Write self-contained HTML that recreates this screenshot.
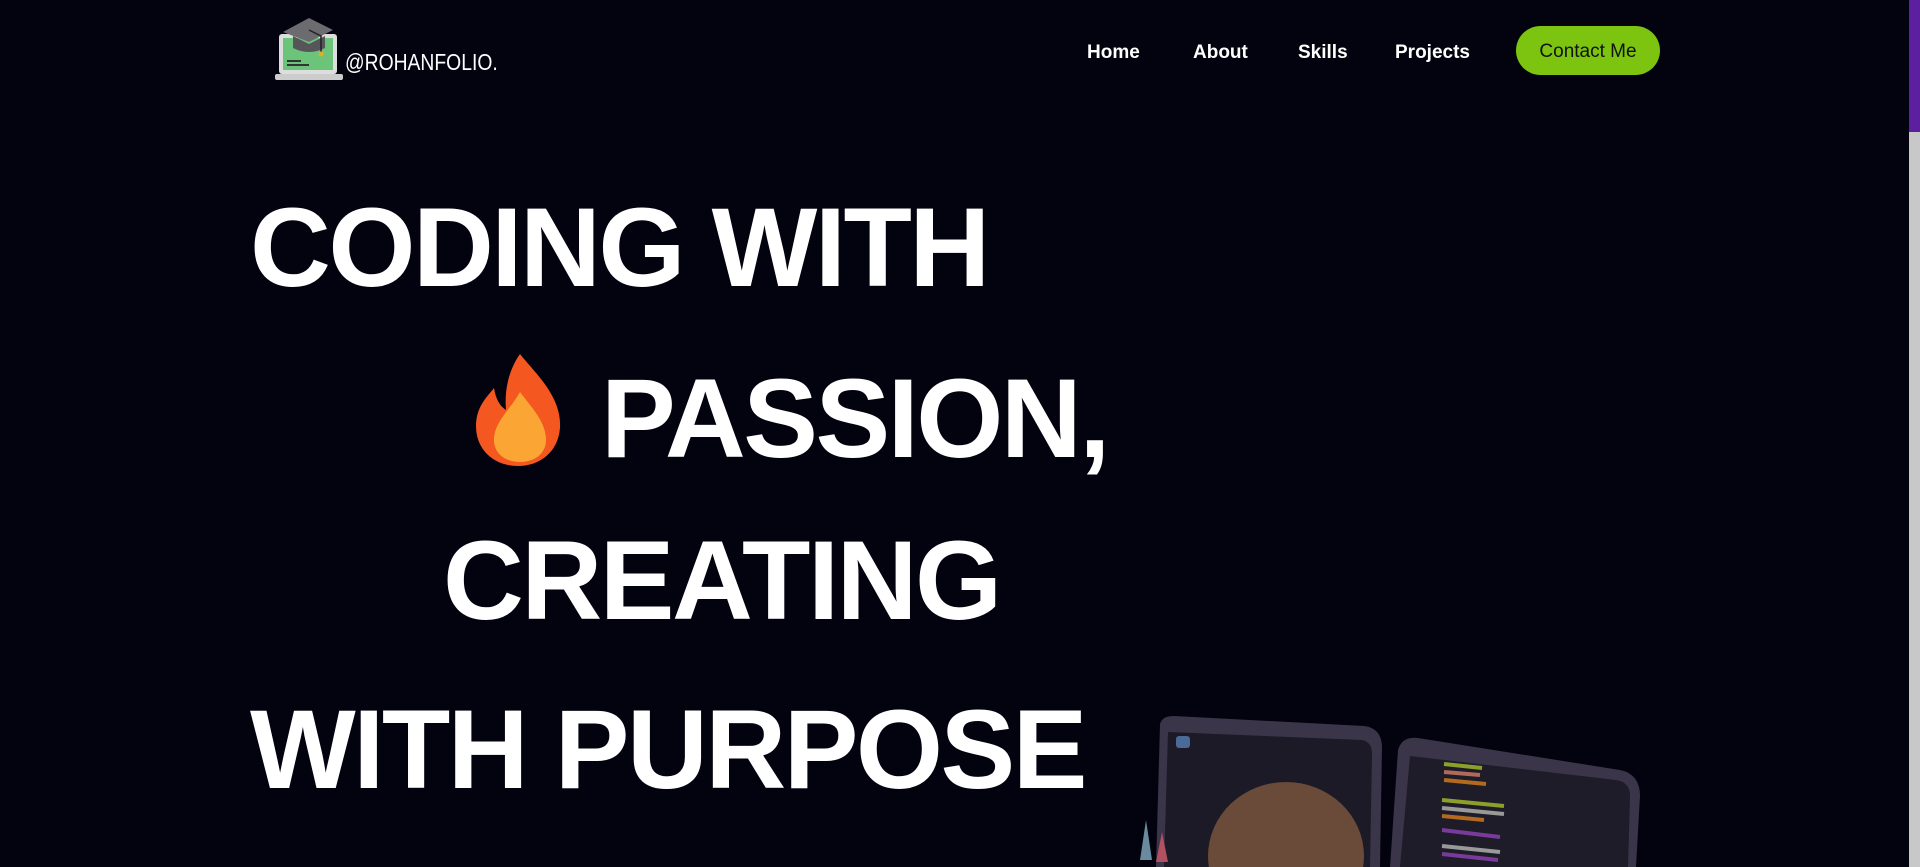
<!DOCTYPE html>
<html><head><style>
html,body{margin:0;padding:0;width:1920px;height:867px;overflow:hidden;background:#03020f;font-family:"Liberation Sans",sans-serif;}
.nav a{position:absolute;top:42px;color:#fff;font-size:19px;font-weight:bold;text-decoration:none}
.btn{position:absolute;left:1516px;top:26px;width:144px;height:49px;border-radius:25px;background:#7cc40f;color:#111;font-size:19px;line-height:51px;text-align:center}
.h{position:absolute;color:#fff;font-weight:bold;font-size:112px;letter-spacing:-2.5px;line-height:1;white-space:nowrap}
.sb{position:absolute;right:0;top:0;width:11px;height:867px;background:#c8c8c8}
.sb div{height:132px;background:#5b1fa0}
</style></head><body>
<svg style="position:absolute;left:273px;top:14px" width="72" height="72" viewBox="0 0 72 72">
<rect x="6" y="20" width="58" height="40" rx="3" fill="#ddd"/>
<rect x="10" y="24" width="50" height="32" fill="#6cc37a"/>
<rect x="2" y="60" width="68" height="6" rx="2" fill="#ccc"/>
<rect x="14" y="46" width="14" height="2" fill="#333"/><rect x="14" y="50" width="22" height="2" fill="#333"/>
<path d="M10 18 L36 4 L60 16 L36 28 Z" fill="#6b6b70"/>
<path d="M20 22 L20 34 Q36 42 52 34 L52 22 L36 30 Z" fill="#55555a"/>
<path d="M36 16 L48 22 L48 38" stroke="#222" stroke-width="1.5" fill="none"/><circle cx="48" cy="40" r="2.5" fill="#e0b020"/>
</svg>
<div style="position:absolute;left:345px;top:49px;color:#fff;font-size:23px;transform:scaleX(0.84);transform-origin:left">@ROHANFOLIO.</div>
<div class="nav"><a style="left:1087px">Home</a><a style="left:1193px">About</a><a style="left:1298px">Skills</a><a style="left:1395px">Projects</a></div>
<div class="btn">Contact Me</div>
<div class="h" style="left:250px;top:192px">CODING WITH</div>
<svg style="position:absolute;left:474px;top:352px" width="90" height="116" viewBox="0 0 90 116">
<path d="M46 2 C60 20 88 44 86 76 C84 100 66 114 44 114 C20 114 2 98 2 74 C2 54 14 44 20 36 C22 48 26 54 32 58 C30 36 36 16 46 2 Z" fill="#f4571f"/>
<path d="M46 40 C58 56 72 70 72 88 C72 102 60 110 46 110 C32 110 20 102 20 88 C20 70 36 58 46 40 Z" fill="#fba634"/>
</svg>
<div class="h" style="left:601px;top:363px">PASSION,</div>
<div class="h" style="left:443px;top:525px">CREATING</div>
<div class="h" style="left:250px;top:694px">WITH PURPOSE</div>
<svg style="position:absolute;left:1100px;top:700px" width="600" height="167">
<path d="M60 24 Q62 16 74 16 L264 26 Q282 28 282 48 L280 167 L56 167 Z" fill="#3a3548"/>
<path d="M68 32 L262 40 Q272 42 272 54 L270 167 L64 167 Z" fill="#1b1a26"/>
<rect x="76" y="36" width="14" height="12" rx="3" fill="#4a6a98"/>
<path d="M298 50 Q302 36 318 38 L520 70 Q540 74 540 96 L536 167 L290 167 Z" fill="#3a3548"/>
<path d="M310 56 L516 80 Q530 82 530 96 L528 167 L300 167 Z" fill="#1d1c28"/>
<g stroke-width="4"><line x1="344" y1="64" x2="382" y2="68" stroke="#8aa02a"/><line x1="344" y1="72" x2="380" y2="75" stroke="#b06a5a"/><line x1="344" y1="80" x2="386" y2="84" stroke="#b36a1e"/><line x1="342" y1="100" x2="404" y2="106" stroke="#8aa02a"/><line x1="342" y1="108" x2="404" y2="114" stroke="#999"/><line x1="342" y1="116" x2="384" y2="120" stroke="#b36a1e"/><line x1="342" y1="130" x2="400" y2="137" stroke="#7a3a9a"/><line x1="342" y1="146" x2="400" y2="152" stroke="#999"/><line x1="342" y1="154" x2="398" y2="160" stroke="#7a3a9a"/></g>
<ellipse cx="186" cy="156" rx="78" ry="74" fill="#6a4a38"/>
<path d="M40 160 L46 120 L52 160 Z" fill="#6a8aa0"/><path d="M56 162 L62 132 L68 162 Z" fill="#b05060"/>
</svg>
<div class="sb"><div></div></div>
</body></html>
